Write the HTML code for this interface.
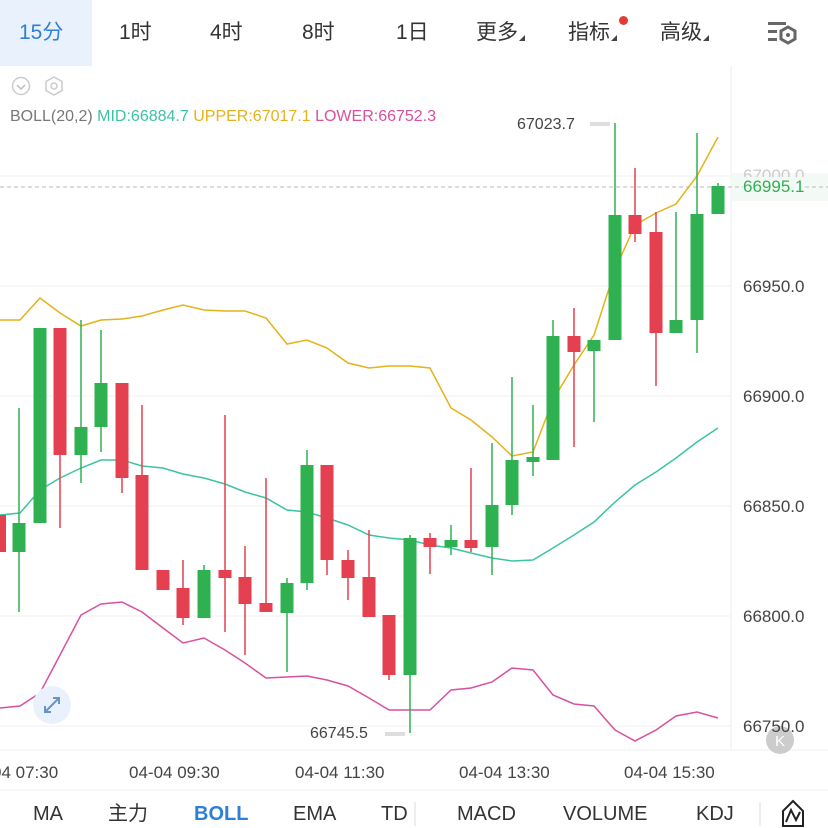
<!DOCTYPE html>
<html><head><meta charset="utf-8"><style>
body{margin:0;width:828px;height:828px;overflow:hidden;background:#fff;font-family:"Liberation Sans","Noto Sans CJK SC",sans-serif;position:relative}
.t{position:absolute;font-size:21px;color:#333;top:19px;line-height:28px}
.b{position:absolute;font-size:20px;color:#333;top:801px;line-height:26px}
.ax{position:absolute;font-size:17px;color:#444;left:743px}
.tm{position:absolute;font-size:17px;color:#444;top:763px}
.tri{display:inline-block;width:0;height:0;border-left:6px solid transparent;border-bottom:6px solid #444;vertical-align:-2px;margin-left:1px}
</style></head><body>
<div style="position:absolute;left:0;top:0;width:92px;height:66px;background:#e9f2fc"></div>
<div class="t" style="left:19px;color:#2f7fd6">15分</div>
<div class="t" style="left:119px">1时</div>
<div class="t" style="left:210px">4时</div>
<div class="t" style="left:302px">8时</div>
<div class="t" style="left:396px">1日</div>
<div class="t" style="left:476px">更多<span class="tri"></span></div>
<div class="t" style="left:568px">指标<span class="tri"></span></div>
<div style="position:absolute;left:619px;top:16px;width:9px;height:9px;border-radius:50%;background:#e53935"></div>
<div class="t" style="left:660px">高级<span class="tri"></span></div>
<svg style="position:absolute;left:766px;top:21px" width="32" height="26"><rect x="2" y="1" width="18" height="3" fill="#666"/><rect x="2" y="9" width="9" height="3" fill="#666"/><rect x="2" y="17" width="9" height="3" fill="#666"/><polygon points="22,6 29,10 29,18 22,22 15,18 15,10" fill="none" stroke="#666" stroke-width="3"/><circle cx="22" cy="14" r="2" fill="#666"/></svg>
<svg style="position:absolute;left:10px;top:75px" width="60" height="22"><circle cx="11" cy="11" r="8.5" fill="none" stroke="#ccc" stroke-width="1.5"/><polyline points="7,10 11,14 15,10" fill="none" stroke="#bbb" stroke-width="1.5"/><polygon points="44,2 52,6.5 52,15.5 44,20 36,15.5 36,6.5" fill="none" stroke="#ccc" stroke-width="1.5"/><circle cx="44" cy="11" r="3" fill="none" stroke="#ccc" stroke-width="1.5"/></svg>
<div style="position:absolute;left:10px;top:108px;font-size:16px;color:#777">BOLL(20,2) <span style="color:#3cc3a4">MID:66884.7</span> <span style="color:#e5b21a">UPPER:67017.1</span> <span style="color:#d9509f">LOWER:66752.3</span></div>
<svg style="position:absolute;left:0;top:0" width="828" height="828">
<line x1="731" y1="66" x2="731" y2="750" stroke="#eee"/>
<g stroke="#f2f2f2"><line x1="0" y1="176" x2="731" y2="176"/><line x1="0" y1="286" x2="731" y2="286"/><line x1="0" y1="396" x2="731" y2="396"/><line x1="0" y1="506" x2="731" y2="506"/><line x1="0" y1="616" x2="731" y2="616"/><line x1="0" y1="726" x2="731" y2="726"/><line x1="0" y1="750" x2="828" y2="750"/><line x1="0" y1="790" x2="828" y2="790"/></g>
<rect x="731" y="173" width="97" height="28" fill="#f3f9f4"/>
<line x1="0" y1="187" x2="828" y2="187" stroke="#bbb" stroke-dasharray="4,3"/>
<g fill="none" stroke-width="1.5">
<polyline stroke="#e5b21a" points="0,320 20,320 40,298 60,313 81,326 101,320 122,319 142,316 163,310 183,305 204,310 225,311 245,311 266,318 287,344 307,340 327,348 348,363 369,368 389,366 410,366 430,368 451,408 471,420 492,437 512,456 533,452 553,400 574,365 594,335 615,270 635,225 656,213 676,204 697,176 718,137"/>
<polyline stroke="#3cc3a4" points="0,515 20,513 40,490 60,478 81,468 101,460 122,460 142,466 163,468 183,474 204,478 225,484 245,492 266,498 287,510 307,512 327,518 348,525 369,535 389,538 410,540 430,545 451,548 471,553 492,558 512,561 533,560 553,548 574,535 594,522 615,502 635,485 656,472 676,458 697,442 718,428"/>
<polyline stroke="#d9509f" points="0,708 20,706 40,693 60,655 81,615 101,604 122,602 142,612 163,628 183,643 204,638 225,650 245,663 266,678 287,677 307,676 327,680 348,686 369,698 389,710 410,710 430,710 451,690 471,688 492,682 512,668 533,670 553,695 574,704 594,706 615,730 635,741 656,730 676,716 697,712 718,718"/>
</g>
<g stroke="#2fb152" stroke-width="1.5">
<line x1="19" y1="408" x2="19" y2="612"/><line x1="81" y1="320" x2="81" y2="483"/><line x1="101" y1="330" x2="101" y2="452"/><line x1="204" y1="565" x2="204" y2="618"/><line x1="287" y1="578" x2="287" y2="672"/><line x1="307" y1="450" x2="307" y2="590"/><line x1="410" y1="535" x2="410" y2="733"/><line x1="451" y1="525" x2="451" y2="555"/><line x1="492" y1="443" x2="492" y2="575"/><line x1="512" y1="377" x2="512" y2="515"/><line x1="533" y1="405" x2="533" y2="476"/><line x1="553" y1="320" x2="553" y2="460"/><line x1="594" y1="340" x2="594" y2="422"/><line x1="615" y1="123" x2="615" y2="340"/><line x1="676" y1="212" x2="676" y2="333"/><line x1="697" y1="133" x2="697" y2="353"/><line x1="718" y1="183" x2="718" y2="214"/>
</g>
<g stroke="#e5404f" stroke-width="1.5">
<line x1="60" y1="328" x2="60" y2="528"/><line x1="122" y1="383" x2="122" y2="493"/><line x1="142" y1="405" x2="142" y2="570"/><line x1="183" y1="560" x2="183" y2="625"/><line x1="225" y1="415" x2="225" y2="632"/><line x1="245" y1="546" x2="245" y2="655"/><line x1="266" y1="478" x2="266" y2="612"/><line x1="327" y1="465" x2="327" y2="575"/><line x1="348" y1="550" x2="348" y2="600"/><line x1="369" y1="530" x2="369" y2="617"/><line x1="389" y1="615" x2="389" y2="680"/><line x1="430" y1="533" x2="430" y2="574"/><line x1="471" y1="468" x2="471" y2="552"/><line x1="574" y1="308" x2="574" y2="447"/><line x1="635" y1="168" x2="635" y2="242"/><line x1="656" y1="212" x2="656" y2="386"/>
</g>
<g fill="#2fb152">
<rect x="12.5" y="523" width="13" height="29"/><rect x="33.5" y="328" width="13" height="195"/><rect x="74.5" y="427" width="13" height="28"/><rect x="94.5" y="383" width="13" height="44"/><rect x="197.5" y="570" width="13" height="48"/><rect x="280.5" y="583" width="13" height="30"/><rect x="300.5" y="465" width="13" height="118"/><rect x="403.5" y="538" width="13" height="137"/><rect x="444.5" y="540" width="13" height="7"/><rect x="485.5" y="505" width="13" height="42"/><rect x="505.5" y="460" width="13" height="45"/><rect x="526.5" y="457" width="13" height="5"/><rect x="546.5" y="336" width="13" height="124"/><rect x="587.5" y="340" width="13" height="11"/><rect x="608.5" y="215" width="13" height="125"/><rect x="669.5" y="320" width="13" height="13"/><rect x="690.5" y="214" width="13" height="106"/><rect x="711.5" y="186" width="13" height="28"/>
</g>
<g fill="#e5404f">
<rect x="-7" y="515" width="13" height="37"/><rect x="53.5" y="328" width="13" height="127"/><rect x="115.5" y="383" width="13" height="95"/><rect x="135.5" y="475" width="13" height="95"/><rect x="156.5" y="570" width="13" height="20"/><rect x="176.5" y="588" width="13" height="30"/><rect x="218.5" y="570" width="13" height="8"/><rect x="238.5" y="577" width="13" height="27"/><rect x="259.5" y="603" width="13" height="9"/><rect x="320.5" y="465" width="13" height="95"/><rect x="341.5" y="560" width="13" height="18"/><rect x="362.5" y="577" width="13" height="40"/><rect x="382.5" y="615" width="13" height="60"/><rect x="423.5" y="538" width="13" height="9"/><rect x="464.5" y="540" width="13" height="8"/><rect x="567.5" y="336" width="13" height="16"/><rect x="628.5" y="215" width="13" height="19"/><rect x="649.5" y="232" width="13" height="101"/>
</g>
<rect x="590" y="122" width="20" height="4" fill="#ddd"/>
<rect x="385" y="732" width="20" height="4" fill="#ddd"/>
<circle cx="52" cy="705" r="19" fill="#e9f2fc"/>
<g stroke="#6a93c9" stroke-width="2" fill="none"><line x1="45" y1="712" x2="59" y2="698"/><polyline points="53,698 59,698 59,704"/><polyline points="45,706 45,712 51,712"/></g>
<circle cx="780" cy="740" r="14" fill="#ccc"/>
<text x="775" y="746" font-size="15" fill="#fff" font-family="Liberation Sans">K</text>
<line x1="760" y1="802" x2="760" y2="826" stroke="#ddd"/>
<line x1="415" y1="802" x2="415" y2="826" stroke="#ddd"/>
<path d="M793 801 L803 811 L803 826 L783 826 L783 811 Z" fill="none" stroke="#222" stroke-width="2"/>
<polyline points="786,822 791,810 796,820 800,812" fill="none" stroke="#222" stroke-width="2"/>
</svg>
<div style="position:absolute;left:517px;top:116px;font-size:16px;color:#444">67023.7</div>
<div style="position:absolute;left:310px;top:725px;font-size:16px;color:#444">66745.5</div>
<div class="ax" style="top:166px;color:#ccc">67000.0</div>
<div class="ax" style="top:177px;color:#2fb152;background:#f3f9f4">66995.1</div>
<div class="ax" style="top:277px">66950.0</div>
<div class="ax" style="top:387px">66900.0</div>
<div class="ax" style="top:497px">66850.0</div>
<div class="ax" style="top:607px">66800.0</div>
<div class="ax" style="top:717px">66750.0</div>
<div class="tm" style="left:-8px">04 07:30</div>
<div class="tm" style="left:129px">04-04 09:30</div>
<div class="tm" style="left:295px">04-04 11:30</div>
<div class="tm" style="left:459px">04-04 13:30</div>
<div class="tm" style="left:624px">04-04 15:30</div>
<div class="b" style="left:33px">MA</div>
<div class="b" style="left:108px">主力</div>
<div class="b" style="left:194px;color:#2f7fd6;font-weight:bold">BOLL</div>
<div class="b" style="left:293px">EMA</div>
<div class="b" style="left:381px">TD</div>
<div class="b" style="left:457px">MACD</div>
<div class="b" style="left:563px">VOLUME</div>
<div class="b" style="left:696px">KDJ</div>
</body></html>
